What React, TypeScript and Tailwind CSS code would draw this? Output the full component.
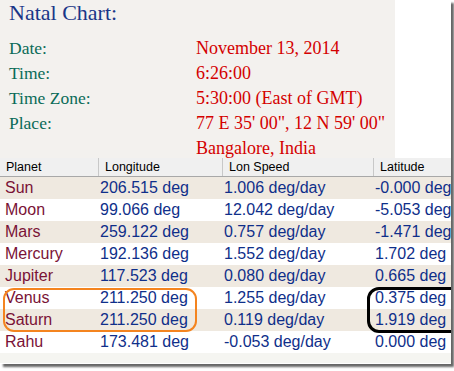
import React from "react";

const chartInfo = [
  { label: "Date:", value: "November 13, 2014" },
  { label: "Time:", value: "6:26:00" },
  { label: "Time Zone:", value: "5:30:00 (East of GMT)" },
  { label: "Place:", value: "77 E 35' 00\", 12 N 59' 00\"" },
  { label: "", value: "Bangalore, India" },
];

const planets = [
  { name: "Sun", lon: "206.515 deg", speed: "1.006 deg/day", lat: "-0.000 deg" },
  { name: "Moon", lon: "99.066 deg", speed: "12.042 deg/day", lat: "-5.053 deg" },
  { name: "Mars", lon: "259.122 deg", speed: "0.757 deg/day", lat: "-1.471 deg" },
  { name: "Mercury", lon: "192.136 deg", speed: "1.552 deg/day", lat: "1.702 deg" },
  { name: "Jupiter", lon: "117.523 deg", speed: "0.080 deg/day", lat: "0.665 deg" },
  { name: "Venus", lon: "211.250 deg", speed: "1.255 deg/day", lat: "0.375 deg" },
  { name: "Saturn", lon: "211.250 deg", speed: "0.119 deg/day", lat: "1.919 deg" },
  { name: "Rahu", lon: "173.481 deg", speed: "-0.053 deg/day", lat: "0.000 deg" },
];

const headers = ["Planet", "Longitude", "Lon Speed", "Latitude"];

export default function App() {
  return (
    <div className="w-[454px] h-[371px] bg-white">
      <div className="relative w-[451px] h-[364px] bg-white overflow-hidden shadow-[3px_3px_2px_rgba(0,0,0,0.6)]">
        {/* chart details */}
        <div className="w-[395px] h-[158px] bg-[#f3f1ee] pl-[9px] pt-[1px] font-['Liberation_Serif',serif]">
          <h1 className="text-[22px] leading-[24px] text-[#1a3688]">Natal Chart:</h1>
          <div className="mt-[11px] grid grid-cols-[187px_1fr] leading-[25px]">
            {chartInfo.map((row, i) => (
              <React.Fragment key={i}>
                <span className="text-[17.5px] text-[#0a6b58]">{row.label}</span>
                <span className="text-[18px] text-[#d40000] whitespace-nowrap">{row.value}</span>
              </React.Fragment>
            ))}
          </div>
        </div>

        {/* planet table */}
        <div className="font-['Liberation_Sans',Arial,sans-serif]">
          <div className="grid grid-cols-[99px_124px_151px_1fr] h-[19px] bg-[#f0f0f0] border-b border-[#a8a8a8] text-[12.5px] leading-[18px] text-black">
            {headers.map((h, i) => (
              <div
                key={h}
                className={`pl-[6px] ${i < 3 ? "border-r border-[#c8c8c8]" : ""}`}
              >
                {h}
              </div>
            ))}
          </div>
          {planets.map((p, i) => (
            <div
              key={p.name}
              className={`grid grid-cols-[99px_124px_151px_1fr] h-[22px] text-[16px] leading-[22px] whitespace-nowrap ${
                i % 2 === 0 ? "bg-[#efe9e0]" : "bg-white"
              }`}
            >
              <div className="pl-[5px] text-[#7a1236]">{p.name}</div>
              <div className="pl-[1px] text-[#0f2f8a]">{p.lon}</div>
              <div className="pl-[1px] text-[#0f2f8a]">{p.speed}</div>
              <div className="pl-[1px] text-[#0f2f8a]">{p.lat}</div>
            </div>
          ))}
          <div className="h-[10px] bg-[#f5f5f1]" />
        </div>

        {/* hand-drawn highlights */}
        <div className="absolute left-[3px] top-[288px] w-[194px] h-[44px] rounded-[11px] border-[2.5px] border-[#f4841f]" />
        <div className="absolute left-[367px] top-[287px] w-[100px] h-[46px] rounded-[12px] border-[3px] border-black" />
      </div>
    </div>
  );
}
